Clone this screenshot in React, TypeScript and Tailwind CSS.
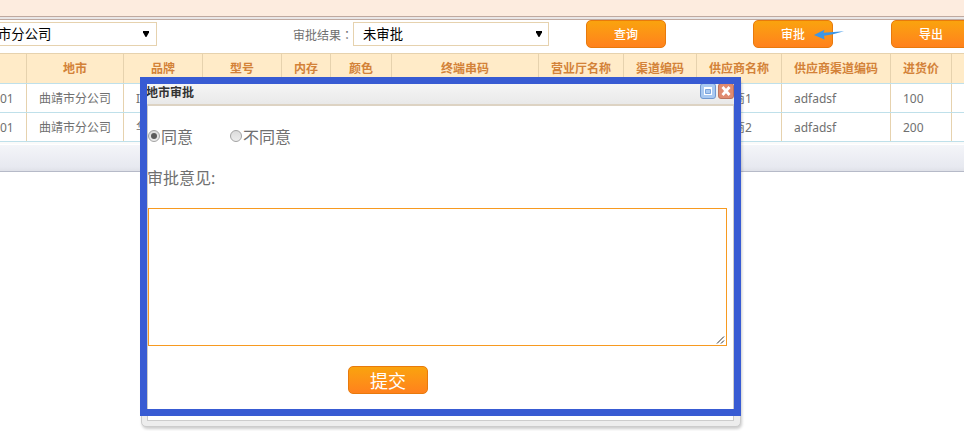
import type { ReactNode } from "react";

const columns: { w: string; title: string; rows: [string, string] }[] = [
  { w: "w-[27px]", title: "", rows: ["01", "01"] },
  { w: "w-[97px]", title: "地市", rows: ["曲靖市分公司", "曲靖市分公司"] },
  { w: "w-[79px]", title: "品牌", rows: ["I", "华"] },
  { w: "w-[79px]", title: "型号", rows: ["", ""] },
  { w: "w-[49px]", title: "内存", rows: ["", ""] },
  { w: "w-[61px]", title: "颜色", rows: ["", ""] },
  { w: "w-[147px]", title: "终端串码", rows: ["", ""] },
  { w: "w-[85px]", title: "营业厅名称", rows: ["", ""] },
  { w: "w-[73px]", title: "渠道编码", rows: ["", ""] },
  { w: "w-[85px]", title: "供应商名称", rows: ["供应商1", "供应商2"] },
  { w: "w-[109px]", title: "供应商渠道编码", rows: ["adfadsf", "adfadsf"] },
  { w: "w-[61px]", title: "进货价", rows: ["100", "200"] },
  { w: "w-[60px]", title: "", rows: ["", ""] },
];

function OrangeButton({ children, className = "" }: { children: ReactNode; className?: string }) {
  return (
    <button
      className={`h-[28px] w-[80px] shrink-0 rounded-[5px] border border-[#e87a0c] bg-linear-to-b from-[#faa30d] to-[#ff811c] text-center text-white ${className}`}
    >
      {children}
    </button>
  );
}

function Caret() {
  return (
    <svg width="6" height="6" viewBox="0 0 6 6" className="mb-px shrink-0">
      <path d="M0 0h6v1.5L3.4 6H2.6L0 1.5z" fill="#000" />
    </svg>
  );
}

function Radio({ checked }: { checked?: boolean }) {
  return (
    <span className="mb-[3px] flex size-[12px] shrink-0 items-center justify-center rounded-full border border-[#a3a3a3] bg-linear-to-b from-[#dcdcdc] to-[#ededed]">
      {checked && <span className="size-[6px] rounded-full bg-[#5c5c5c]" />}
    </span>
  );
}

export default function App() {
  return (
    <div className="relative h-[431px] w-[964px] overflow-hidden bg-white font-['Noto_Sans','Noto_Sans_CJK_SC',sans-serif] text-[12px] text-[#707070]">
      <div className="h-[16px] bg-[#fdecdf]" />
      <div className="h-[4px] border-y border-[#bfa9a0] bg-[#e9e6e6]" />

      <div className="flex h-[33px]">
        <div className="mt-[2px] flex h-[24px] w-[157px] shrink-0 items-center justify-between border border-l-0 border-[#e6d2ae] pr-[7px] text-[13.33px] text-black">
          <span className="-ml-[2px] mt-[2px] whitespace-nowrap">市分公司</span>
          <Caret />
        </div>
        <span className="ml-[136px] mt-[6px] w-[60px] shrink-0 whitespace-nowrap leading-[18px]">
          审批结果<span className="font-['Noto_Sans_CJK_TC',sans-serif]">：</span>
        </span>
        <div className="mt-[2px] flex h-[24px] w-[196px] shrink-0 items-center justify-between border border-[#e6d2ae] pl-[9px] pr-[6px] text-[13.33px] text-black">
          <span className="mt-[2px]">未审批</span>
          <Caret />
        </div>
        <OrangeButton className="ml-[37px] pt-[2px] font-medium">查询</OrangeButton>
        <OrangeButton className="relative ml-[87px] pt-[2px] font-medium">
          审批
          <svg className="absolute left-[60px] top-[8px]" width="31" height="12" viewBox="0 0 31 12">
            <path d="M0 6L10.5 .8L9.5 3.8L30 2.2L19 5.2L10 6.8L10.5 10.5z" fill="#3a96e8" />
          </svg>
        </OrangeButton>
        <OrangeButton className="ml-[58px] pt-[2px] font-medium">导出</OrangeButton>
      </div>

      <div className="flex h-[31px] border-b border-t border-b-[#bfe0ea] border-t-[#e6d2ae] bg-[#ffebc8]">
        {columns.map((c, i) => (
          <div
            key={i}
            className={`flex shrink-0 items-center justify-center whitespace-nowrap border-r border-[#e6d2ae] font-bold text-[#d38238] ${c.w}`}
          >
            {c.title}
          </div>
        ))}
      </div>
      {[0, 1].map((r) => (
        <div key={r} className="flex h-[29px] border-b border-[#bfe0ea]">
          {columns.map((c, i) => (
            <div
              key={i}
              className={`flex shrink-0 items-center overflow-hidden whitespace-nowrap border-r border-[#e6d2ae] pt-[2px] ${i === 0 ? "pl-0" : "pl-[12px]"} ${c.w}`}
            >
              {c.rows[r]}
            </div>
          ))}
        </div>
      ))}
      <div className="h-[2px] bg-[#fafafa]" />
      <div className="mt-px h-[27px] border-b border-[#b6bac8] bg-linear-to-b from-[#f4f5f9] from-0% via-[#e7e9f0] via-85% to-[#dfe1e8]" />

      <div className="absolute left-[141px] top-[78px] flex h-[349px] w-[600px] flex-col rounded-[5px] border border-[#ccc] bg-[#ededed] pb-[5px] pl-[5px] pr-[6px] shadow-[1px_2px_3px_rgba(0,0,0,0.2)]">
        <div className="flex h-[25px] shrink-0 justify-between bg-linear-to-b from-[#f8f8f8] to-[#e9e9e9]">
          <span className="-ml-px mt-[5px] font-bold leading-[18px] text-[#333]">地市审批</span>
          <div className="mt-[4px] flex gap-[2px]">
            <svg width="16" height="16" viewBox="0 0 16 16">
              <rect x=".5" y=".5" width="15" height="15" rx="2.5" fill="#a9c9f1" stroke="#7098d0" />
              <path d="M4 4h8v8H4z" fill="#fff" />
              <path d="M5.5 6.5h5v4h-5z" fill="#a9c9f1" stroke="#7ba4dd" />
            </svg>
            <svg width="16" height="16" viewBox="0 0 16 16">
              <rect x=".5" y=".5" width="15" height="15" rx="2.5" fill="#e08b70" stroke="#bd735d" />
              <path d="M4.5 4l7 8M11.5 4l-7 8" stroke="#fff" strokeWidth="2.7" />
            </svg>
          </div>
        </div>
        <div className="flex flex-1 flex-col border border-t-2 border-[#ccc] border-t-[#ddd3c3] bg-white text-[16px]">
          <div className="mt-[19px] flex h-[24px] items-center">
            <Radio checked />
            <span className="ml-px w-[69px] leading-[24px]">同意</span>
            <Radio />
            <span className="ml-px leading-[24px]">不同意</span>
          </div>
          <div className="-ml-px mt-[17px] h-[24px] leading-[24px]">审批意见:</div>
          <div className="mt-[18px] flex h-[138px] w-[579px] items-end justify-end border border-[#f79a20] bg-white">
            <svg width="10" height="10" viewBox="0 0 10 10">
              <path d="M1 8.5L8 1.5M5 8.5L8 5.5" stroke="#333" />
            </svg>
          </div>
          <div className="mt-[20px] flex pl-[200px]">
            <OrangeButton className="pt-px text-[18px] leading-[26px]">提交</OrangeButton>
          </div>
        </div>
      </div>
      <div className="absolute left-[140px] top-[77px] h-[339px] w-[601px] border-[7px] border-[#385bd3]" />
    </div>
  );
}
